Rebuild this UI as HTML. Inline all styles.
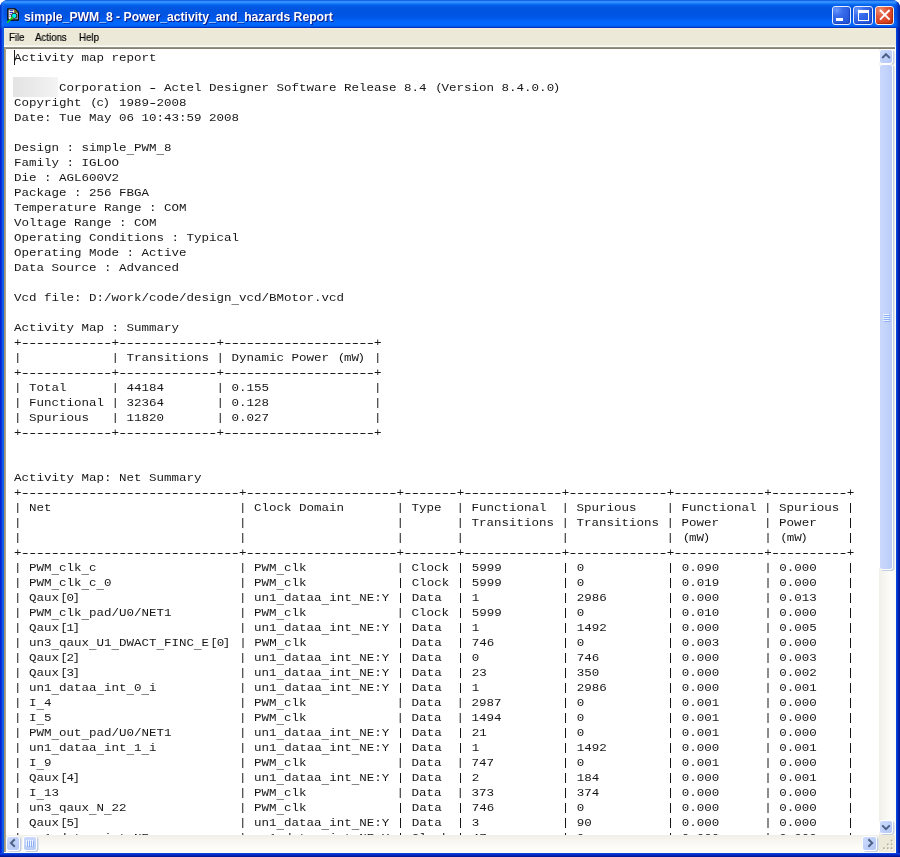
<!DOCTYPE html>
<html><head><meta charset="utf-8"><title>simple_PWM_8 - Power_activity_and_hazards Report</title>
<style>
html,body{margin:0;padding:0;background:#fff;}
body{width:900px;height:857px;position:relative;overflow:hidden;font-family:"Liberation Sans",sans-serif;}
div,span,svg{position:absolute;}
#win{left:0;top:0;width:900px;height:857px;background:#0831d9;border-radius:8px 8px 0 0;overflow:hidden;}
#tb{left:0;top:0;width:900px;height:28px;
 background:linear-gradient(to bottom,#0044d8 0px,#2a85fb 1px,#3b97ff 2px,#2588ff 3px,#0b70f8 4px,#0360ea 5.5px,#0057e2 7px,#0054e0 13px,#0056e6 17px,#0060f4 20px,#0068ff 23px,#0068ff 25px,#0058e8 26.5px,#0030c4 27.5px,#0030c0 28px);}
#tbl{left:0;top:0;width:5px;height:28px;background:linear-gradient(to right,#0038c8 0,#0038c8 1px,rgba(30,110,250,.7) 2px,rgba(0,80,230,0) 5px);}
#tbr{left:895px;top:0;width:5px;height:28px;background:linear-gradient(to left,#0028a8 0,#0030b8 1.5px,rgba(0,60,210,.6) 3px,rgba(0,80,230,0) 5px);}
#title{left:24px;top:8.6px;will-change:transform;color:#fff;font-weight:bold;font-size:12.2px;line-height:16px;white-space:nowrap;text-shadow:1px 1px 0 #0a1883;}
#lb{left:0;top:28px;width:4px;height:829px;background:linear-gradient(to right,#0019cf 0%,#0831d9 35%,#166aee 75%,#0855dd 100%);}
#rb{left:896px;top:28px;width:4px;height:829px;background:linear-gradient(to right,#0855dd 0%,#0831d9 30%,#001ea0 75%,#00138c 100%);}
#bb{left:0;top:853px;width:900px;height:4px;background:linear-gradient(to bottom,#0855dd 0%,#0831d9 30%,#001ea0 75%,#00138c 100%);}
#menu{left:4px;top:28px;width:892px;height:19px;background:linear-gradient(to bottom,#f6f0da 0,#efebd9 1.5px,#ece9d8 2.5px,#ece9d8 17px,#f6f5ee 17.6px,#fbfbf7 18.4px,#fbfbf7 19px);font-size:10.3px;color:#000;}
#menu span{top:3.5px;-webkit-text-stroke:.2px #000;line-height:12px;transform:scaleX(.94);transform-origin:0 0;will-change:transform;}
#pane{left:4px;top:47px;width:892px;height:806px;background:#fff;}
#bt{left:0;top:0;width:891px;height:2px;background:linear-gradient(to bottom,#aaa798 0,#8c8979 35%,#7f7c6c 100%);}
#bl{left:0;top:1px;width:2px;height:804px;background:linear-gradient(to right,#9c9479 0,#9c9479 60%,#c4c0b2 100%);}
#br{left:891px;top:0;width:1px;height:806px;background:#fdfcf6;}
#bbm{left:0;top:805px;width:892px;height:1px;background:#fdfcf6;}
#txt{left:2px;top:2px;width:872.5px;height:786px;background:#fff;overflow:hidden;}
pre{margin:0;position:absolute;left:8px;top:2px;font-family:"Liberation Mono",monospace;font-size:11px;line-height:15px;color:#161616;white-space:pre;transform:scaleX(1.13636);transform-origin:0 0;will-change:transform;}
pre i,pre b,pre u,pre s{font-style:normal;font-weight:normal;text-decoration:none;position:relative;}
pre i{top:2.8px;}
pre s{top:-.5px;text-shadow:.7px 0 0 #161616,-.7px 0 0 #161616;}
pre b{left:1px;}
pre u{left:-1.3px;}
#blur{left:7px;top:28px;width:45px;height:20px;background:linear-gradient(to right,#e4e4e4,#ececec 60%,#f4f4f4);}
#caret{left:8px;top:1px;width:1px;height:14.7px;background:#1c1c1c;}
#sbv{left:874.5px;top:2px;width:16.5px;height:786px;background:linear-gradient(to right,#f1efe9,#f6f5f0 30%,#fdfdfa 80%,#fbfaf4);}
#sbh{left:2px;top:788px;width:872.5px;height:17px;background:linear-gradient(to bottom,#f1efe9,#f6f5f0 30%,#fdfdfa 80%,#fbfaf4);}
#corner{left:874.5px;top:788px;width:16.5px;height:17px;background:#ece9d8;}
.btn{box-sizing:border-box;border:1px solid #fff;border-radius:3px;background:linear-gradient(135deg,#cddbfd 0%,#c1d2fa 45%,#b3c7f6 100%);box-shadow:1.5px 1px 0 0 #c2cfe2;}
.cap{box-sizing:border-box;top:5.5px;width:19.5px;height:19.5px;border:1px solid #e6edfd;border-radius:3px;
 background:radial-gradient(circle at 22% 18%,#6a98fa 0%,#3b6eec 30%,#2a5ce0 65%,#2250d0 100%);box-shadow:inset -1px -1px 1px rgba(10,30,140,.35);}
#bx{border-color:#fbeee8;background:radial-gradient(circle at 25% 20%,#f0906e 0%,#e2573a 35%,#d8421f 70%,#b8300f 100%);box-shadow:inset -1px -1px 1px rgba(120,20,0,.45);}
</style></head><body>
<div id="win">
<div id="tb"></div><div id="tbl"></div><div id="tbr"></div>
<svg style="left:6px;top:7px" width="15" height="17" viewBox="0 0 15 17">
<path d="M1.9 1.8 H8.8 L12.3 5.2 V13 H1.9 Z" fill="#f4efe4" stroke="#050505" stroke-width="1.35" stroke-linejoin="round"/>
<path d="M8.6 1.9 L12.2 5.4 H8.6 Z" fill="#8a8208" stroke="#2a2a10" stroke-width=".6"/>
<rect x="3.6" y="3.1" width="3.6" height="1" fill="#3535c8"/>
<rect x="3.6" y="5" width="3.6" height="1" fill="#3535c8"/>
<rect x="3.6" y="6.9" width="1.6" height="1" fill="#3535c8"/>
<rect x="3.4" y="8.8" width="1" height="1" fill="#3535c8"/>
<rect x="10" y="10.6" width="1" height="1" fill="#3535c8"/>
<circle cx="8.2" cy="8.8" r="2.7" fill="#00f0f0" stroke="#251a14" stroke-width="1"/>
<path d="M6.3 10.6 L1.6 15.2" stroke="#10d010" stroke-width="1.6" stroke-linecap="round"/>
</svg>
<div id="title">simple_PWM_8 - Power_activity_and_hazards Report</div>
<div class="cap" style="left:831.6px"><div style="left:3.4px;top:11.2px;width:7px;height:3px;background:#fff"></div></div>
<div class="cap" style="left:853.1px"><div style="left:3.6px;top:3.6px;width:11.4px;height:10.9px;box-sizing:border-box;border:1px solid #fff;border-top-width:3px"></div></div>
<div class="cap" id="bx" style="left:874.9px"><svg style="left:-.4px;top:-.3px" width="18" height="18" viewBox="0 0 18 18"><path d="M4 4 L13.6 13.6 M13.6 4 L4 13.6" stroke="#fff" stroke-width="2"/></svg></div>
<div id="lb"></div><div id="rb"></div><div id="bb"></div>
<div id="menu"><span style="left:4.8px">File</span><span style="left:31px">Actions</span><span style="left:75.2px">Help</span></div>
<div id="pane">
<div id="txt"><div id="blur"></div><pre>Activity map report

      Corporation <s>-</s> Actel Designer Software Release 8.4 <b>(</b>Version 8.4.0.0<u>)</u>
Copyright <b>(</b>c<u>)</u> 1989<s>-</s>2008
Date: Tue May 06 10:43:59 2008

Design : simple<i>_</i>PWM<i>_</i>8
Family : IGLOO
Die : AGL600V2
Package : 256 FBGA
Temperature Range : COM
Voltage Range : COM
Operating Conditions : Typical
Operating Mode : Active
Data Source : Advanced

Vcd file: D:/work/code/design<i>_</i>vcd/BMotor.vcd

Activity Map : Summary
+<s>------------</s>+<s>-------------</s>+<s>--------------------</s>+
|            | Transitions | Dynamic Power <b>(</b>mW<u>)</u> |
+<s>------------</s>+<s>-------------</s>+<s>--------------------</s>+
| Total      | 44184       | 0.155              |
| Functional | 32364       | 0.128              |
| Spurious   | 11820       | 0.027              |
+<s>------------</s>+<s>-------------</s>+<s>--------------------</s>+


Activity Map: Net Summary
+<s>-----------------------------</s>+<s>--------------------</s>+<s>-------</s>+<s>-------------</s>+<s>-------------</s>+<s>------------</s>+<s>----------</s>+
| Net                         | Clock Domain       | Type  | Functional  | Spurious    | Functional | Spurious |
|                             |                    |       | Transitions | Transitions | Power      | Power    |
|                             |                    |       |             |             | <b>(</b>mW<u>)</u>       | <b>(</b>mW<u>)</u>     |
+<s>-----------------------------</s>+<s>--------------------</s>+<s>-------</s>+<s>-------------</s>+<s>-------------</s>+<s>------------</s>+<s>----------</s>+
| PWM<i>_</i>clk<i>_</i>c                   | PWM<i>_</i>clk            | Clock | 5999        | 0           | 0.090      | 0.000    |
| PWM<i>_</i>clk<i>_</i>c<i>_</i>0                 | PWM<i>_</i>clk            | Clock | 5999        | 0           | 0.019      | 0.000    |
| Qaux<b>[</b>0<u>]</u>                     | un1<i>_</i>dataa<i>_</i>int<i>_</i>NE:Y | Data  | 1           | 2986        | 0.000      | 0.013    |
| PWM<i>_</i>clk<i>_</i>pad/U0/NET1         | PWM<i>_</i>clk            | Clock | 5999        | 0           | 0.010      | 0.000    |
| Qaux<b>[</b>1<u>]</u>                     | un1<i>_</i>dataa<i>_</i>int<i>_</i>NE:Y | Data  | 1           | 1492        | 0.000      | 0.005    |
| un3<i>_</i>qaux<i>_</i>U1<i>_</i>DWACT<i>_</i>FINC<i>_</i>E<b>[</b>0<u>]</u> | PWM<i>_</i>clk            | Data  | 746         | 0           | 0.003      | 0.000    |
| Qaux<b>[</b>2<u>]</u>                     | un1<i>_</i>dataa<i>_</i>int<i>_</i>NE:Y | Data  | 0           | 746         | 0.000      | 0.003    |
| Qaux<b>[</b>3<u>]</u>                     | un1<i>_</i>dataa<i>_</i>int<i>_</i>NE:Y | Data  | 23          | 350         | 0.000      | 0.002    |
| un1<i>_</i>dataa<i>_</i>int<i>_</i>0<i>_</i>i           | un1<i>_</i>dataa<i>_</i>int<i>_</i>NE:Y | Data  | 1           | 2986        | 0.000      | 0.001    |
| I<i>_</i>4                         | PWM<i>_</i>clk            | Data  | 2987        | 0           | 0.001      | 0.000    |
| I<i>_</i>5                         | PWM<i>_</i>clk            | Data  | 1494        | 0           | 0.001      | 0.000    |
| PWM<i>_</i>out<i>_</i>pad/U0/NET1         | un1<i>_</i>dataa<i>_</i>int<i>_</i>NE:Y | Data  | 21          | 0           | 0.001      | 0.000    |
| un1<i>_</i>dataa<i>_</i>int<i>_</i>1<i>_</i>i           | un1<i>_</i>dataa<i>_</i>int<i>_</i>NE:Y | Data  | 1           | 1492        | 0.000      | 0.001    |
| I<i>_</i>9                         | PWM<i>_</i>clk            | Data  | 747         | 0           | 0.001      | 0.000    |
| Qaux<b>[</b>4<u>]</u>                     | un1<i>_</i>dataa<i>_</i>int<i>_</i>NE:Y | Data  | 2           | 184         | 0.000      | 0.001    |
| I<i>_</i>13                        | PWM<i>_</i>clk            | Data  | 373         | 374         | 0.000      | 0.000    |
| un3<i>_</i>qaux<i>_</i>N<i>_</i>22               | PWM<i>_</i>clk            | Data  | 746         | 0           | 0.000      | 0.000    |
| Qaux<b>[</b>5<u>]</u>                     | un1<i>_</i>dataa<i>_</i>int<i>_</i>NE:Y | Data  | 3           | 90          | 0.000      | 0.000    |
| un1<i>_</i>dataa<i>_</i>int<i>_</i>NE            | un1<i>_</i>dataa<i>_</i>int<i>_</i>NE:Y | Clock | 47          | 0           | 0.000      | 0.000    |</pre><div id="caret"></div></div>
<div id="sbv">
 <div class="btn" style="left:.5px;top:0;width:14px;height:14.5px"><svg style="left:0.2px;top:0.2px" width="12" height="12" viewBox="0 0 12 12"><path d="M2.2 8 L6 4.2 L9.8 8" fill="none" stroke="#4d6185" stroke-width="2"/></svg></div>
 <div class="btn" style="left:.5px;top:15.2px;width:14px;height:506.3px;background:linear-gradient(to right,#c9d7fc,#c3d3fb 50%,#b9cbf7)">
   <svg style="left:2.5px;top:249px" width="8" height="9" viewBox="0 0 8 9"><path d="M0 .5H6M0 2.5H6M0 4.5H6M0 6.5H6" stroke="#eef4fe" stroke-width="1"/><path d="M1 1.5H7M1 3.5H7M1 5.5H7M1 7.5H7" stroke="#8cb0f8" stroke-width="1"/></svg>
 </div>
 <div class="btn" style="left:.5px;top:770.5px;width:14px;height:14.5px"><svg style="left:0.2px;top:0.2px" width="12" height="12" viewBox="0 0 12 12"><path d="M2.2 4.4 L6 8.2 L9.8 4.4" fill="none" stroke="#4d6185" stroke-width="2"/></svg></div>
</div>
<div id="sbh">
 <div class="btn" style="left:.3px;top:1.3px;width:13.5px;height:14.5px"><svg style="left:-0.3px;top:0.2px" width="12" height="12" viewBox="0 0 12 12"><path d="M7.8 2.2 L4 6 L7.8 9.8" fill="none" stroke="#4d6185" stroke-width="2"/></svg></div>
 <div class="btn" style="left:16.7px;top:1.3px;width:14.6px;height:14.5px;background:linear-gradient(to bottom,#c9d7fc,#c3d3fb 50%,#b9cbf7)">
   <svg style="left:2.5px;top:2.5px" width="9" height="8" viewBox="0 0 9 8"><path d="M.5 0V6M2.5 0V6M4.5 0V6M6.5 0V6" stroke="#eef4fe" stroke-width="1"/><path d="M1.5 1V7M3.5 1V7M5.5 1V7M7.5 1V7" stroke="#8cb0f8" stroke-width="1"/></svg>
 </div>
 <div class="btn" style="left:856.3px;top:1.3px;width:15.2px;height:14.5px"><svg style="left:0.8px;top:0.2px" width="12" height="12" viewBox="0 0 12 12"><path d="M4.4 2.2 L8.2 6 L4.4 9.8" fill="none" stroke="#4d6185" stroke-width="2"/></svg></div>
</div>
<div id="corner"><svg style="left:3px;top:4px" width="12" height="12" viewBox="0 0 12 12">
 <g fill="#fff"><rect x="9.6" y="1.6" width="1.6" height="1.6"/><rect x="5.8" y="5.4" width="1.6" height="1.6"/><rect x="9.6" y="5.4" width="1.6" height="1.6"/><rect x="2" y="9.2" width="1.6" height="1.6"/><rect x="5.8" y="9.2" width="1.6" height="1.6"/><rect x="9.6" y="9.2" width="1.6" height="1.6"/></g>
 <g fill="#b0ab96"><rect x="8.8" y=".8" width="1.6" height="1.6"/><rect x="5" y="4.6" width="1.6" height="1.6"/><rect x="8.8" y="4.6" width="1.6" height="1.6"/><rect x="1.2" y="8.4" width="1.6" height="1.6"/><rect x="5" y="8.4" width="1.6" height="1.6"/><rect x="8.8" y="8.4" width="1.6" height="1.6"/></g>
</svg></div>
<div id="bt"></div><div id="bl"></div><div id="br"></div><div id="bbm"></div>
</div>
</div>
</body></html>
